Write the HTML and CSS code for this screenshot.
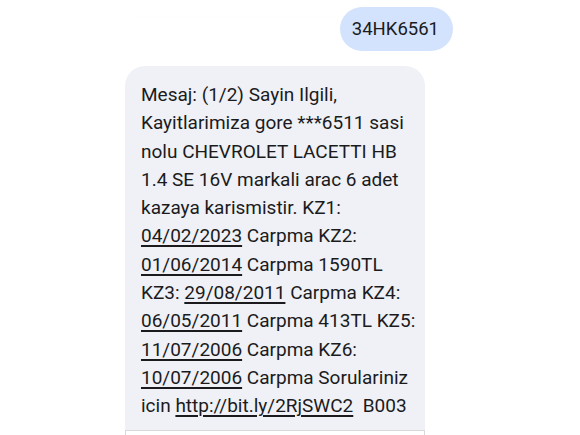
FILE: index.html
```html
<!DOCTYPE html>
<html lang="tr">
<head>
<meta charset="utf-8">
<title>Mesajlar</title>
<link rel="stylesheet" href="styles.css">
</head>
<body>
<div class="screen">
  <div class="edge-shadow"></div>
  <div class="thread">
    <div class="row row-out">
      <div class="bubble bubble-out">34HK6561</div>
    </div>
    <div class="row row-in">
      <div class="bubble bubble-in">
        <p class="sms">Mesaj: (1/2) Sayin Ilgili,<br>Kayitlarimiza gore ***6511 sasi<br>nolu CHEVROLET LACETTI HB<br>1.4 SE 16V markali arac 6 adet<br>kazaya karismistir. KZ1:<br><span class="u">04/02/2023</span> Carpma KZ2:<br><span class="u">01/06/2014</span> Carpma 1590TL<br>KZ3: <span class="u">29/08/2011</span> Carpma KZ4:<br><span class="u">06/05/2011</span> Carpma 413TL KZ5:<br><span class="u">11/07/2006</span> Carpma KZ6:<br><span class="u">10/07/2006</span> Carpma Sorulariniz<br>icin <span class="u">http://bit.ly/2RjSWC2</span>&nbsp; B003</p>
      </div>
    </div>
    <div class="row row-in">
      <div class="next-card"></div>
    </div>
  </div>
</div>
</body>
</html>
```

FILE: styles.css
```css
html, body {
  margin: 0;
  padding: 0;
  background: #ffffff;
}

.screen {
  position: relative;
  width: 580px;
  height: 435px;
  overflow: hidden;
  font-family: Roboto, "Noto Sans", Arial, sans-serif;
  color: #1b1b1d;
}

/* faint rounded edge of the card above the thread */
.edge-shadow {
  position: absolute;
  left: 114px;
  top: -40px;
  width: 348px;
  height: 56px;
  border-radius: 0 0 22px 22px;
  box-shadow: 0 0 3px rgba(0, 0, 0, 0.012);
  z-index: 0;
}

.thread {
  position: relative;
  z-index: 1;
  display: flex;
  flex-direction: column;
  gap: 15px;
  padding-top: 7px;
}

.row {
  display: flex;
}

.row-out {
  justify-content: flex-end;
  padding-right: 127px;
}

.row-in {
  justify-content: flex-start;
  padding-left: 125px;
}

.bubble {
  box-sizing: border-box;
}

.bubble-out {
  height: 44px;
  line-height: 44px;
  padding: 0 14px 0 12px;
  border-radius: 22px;
  background: #d3e3fd;
  font-size: 18.5px;
}

.bubble-in {
  width: 300px;
  height: 364px;
  padding: 15px 16px 0 16px;
  border-radius: 20px 20px 0 0;
  background: #eff1f6;
  font-size: 19px;
}

.sms {
  margin: 0;
  line-height: 28.3px;
  white-space: nowrap;
}

.u {
  text-decoration: underline;
  text-decoration-thickness: 1.5px;
  text-underline-offset: 3px;
}

.next-card {
  box-sizing: border-box;
  width: 300px;
  height: 30px;
  margin-top: -15px;
  border: 1px solid #d9d9d9;
  border-bottom: none;
  background: #ffffff;
}
```
